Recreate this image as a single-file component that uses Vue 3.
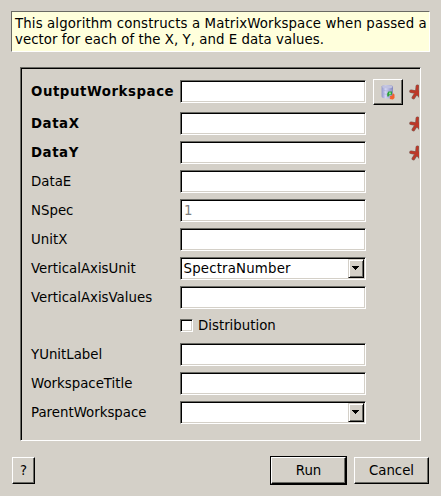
<script setup>
const rows = [
  { label: 'OutputWorkspace', required: true, save: true },
  { label: 'DataX', required: true },
  { label: 'DataY', required: true },
  { label: 'DataE' },
  { label: 'NSpec', placeholder: '1' },
  { label: 'UnitX' },
  { label: 'VerticalAxisUnit', kind: 'combo', value: 'SpectraNumber' },
  { label: 'VerticalAxisValues' },
  { label: 'Distribution', kind: 'check' },
  { label: 'YUnitLabel' },
  { label: 'WorkspaceTitle' },
  { label: 'ParentWorkspace', kind: 'combo', value: '' },
]
</script>

<template>
  <main class="dialog">
    <p class="message">This algorithm constructs a MatrixWorkspace when passed a<br /><span class="second">vector for each of the X, Y, and E data values.</span></p>

    <section class="frame">
      <div
        v-for="row in rows"
        :key="row.label"
        class="row"
        :class="{ tall: row.save, checkrow: row.kind === 'check' }"
      >
        <template v-if="row.kind === 'check'">
          <span class="label"></span>
          <label class="check"><span class="box"></span><span>{{ row.label }}</span></label>
        </template>
        <template v-else>
          <span class="label" :class="{ bold: row.required }">{{ row.label }}</span>
          <div v-if="row.kind === 'combo'" class="field combo">
            <span class="value">{{ row.value }}</span>
            <span class="arrow">
              <svg width="7" height="4" viewBox="0 0 7 4" shape-rendering="crispEdges">
                <path d="M0 0H7V1H6V2H5V3H4V4H3V3H2V2H1V1H0Z" />
              </svg>
            </span>
          </div>
          <div v-else class="field"><span class="placeholder">{{ row.placeholder }}</span></div>
          <span class="action">
            <button v-if="row.save" class="raised save" type="button" aria-label="Replace">
              <svg width="16" height="16" viewBox="0 0 16 16">
                <defs>
                  <linearGradient id="drum" x1="0" x2="1" y1="0" y2="0">
                    <stop offset="0" stop-color="#9094c8" />
                    <stop offset=".35" stop-color="#d4d6f4" />
                    <stop offset="1" stop-color="#8084bc" />
                  </linearGradient>
                </defs>
                <path d="M1.6 2.6Q1.6 .9 7.3 .9T13 2.6V12.6Q13 14.5 7.3 14.5T1.6 12.6Z" fill="url(#drum)" />
                <ellipse cx="7.3" cy="2.7" rx="5.2" ry="1.5" fill="#c0c2e0" />
                <path d="M1.8 6Q7.3 8 12.8 6M1.8 9.5Q7.3 11.5 12.8 9.5" fill="none" stroke="#a4a8d8" stroke-width=".5" />
                <path d="M7.2 12.6V9.4L8.4 7.4H12V10.8H9.8L8.6 12.6Z" fill="#2ca03c" />
                <path d="M9 8.6H10.9V10.2H9Z" fill="#90e890" />
                <path d="M9.8 12.2L12.2 11.4L12.8 9L14.5 10.4V14L12.9 15.4L9.5 15L10.4 13.7Z" fill="#f4602c" />
              </svg>
            </button>
          </span>
          <span class="marker">
            <svg v-if="row.required" width="16" height="16" viewBox="0 0 16 16">
              <g fill="none" stroke-linecap="round">
                <path class="rim" d="M7.8 8.2L8.4 2.2M7.8 8.2L2 7.2M7.8 8.2L4.4 13.6M7.8 8.2L11.6 13.2M7.8 8.2L13.5 6.2" />
                <path class="core" d="M7.8 8.2L8.4 2.2M7.8 8.2L2 7.2M7.8 8.2L4.4 13.6M7.8 8.2L11.6 13.2M7.8 8.2L13.5 6.2" />
              </g>
            </svg>
          </span>
        </template>
      </div>
    </section>

    <footer class="buttons">
      <button class="raised help" type="button">?</button>
      <span class="default"><button class="raised run" type="button">Run</button></span>
      <button class="raised cancel" type="button">Cancel</button>
    </footer>
  </main>
</template>

<style>
body {
  background: #d4d0c8;
}
</style>

<style scoped>
.dialog {
  box-sizing: border-box;
  width: 441px;
  height: 496px;
  padding: 11px 11px 0;
  overflow: hidden;
  background: #d4d0c8;
  color: #000;
  font: 13.33px/16px "DejaVu Sans", sans-serif;
  white-space: nowrap;
}
.message {
  box-sizing: border-box;
  height: 41px;
  margin: 0;
  padding: 4px 3px 0;
  border: 1px solid;
  border-color: #6a6a64 #fff #fff #6a6a64;
  background: #ffffdc;
  letter-spacing: 0.12px;
}
.second {
  letter-spacing: 0.05px;
}
.frame {
  box-sizing: border-box;
  display: flex;
  flex-direction: column;
  gap: 6px;
  width: 401px;
  height: 374px;
  margin: 15px 0 0 9px;
  padding: 11px 1px 0 10px;
  overflow: hidden;
  border: 1px solid;
  border-color: #6a6a64 #fff #fff #6a6a64;
  box-shadow: inset 1px 1px #000, inset -1px -1px #d4d0c8;
}
.row {
  flex: none;
  display: grid;
  grid-template-columns: 149px 186px 37px 16px;
  align-items: center;
  height: 23px;
}
.tall {
  height: 27px;
}
.tall .field {
  margin-bottom: 2px;
}
.tall .label,
.tall .marker,
.tall .action {
  margin-bottom: 1px;
}
.checkrow {
  height: 22px;
}
.bold {
  font-weight: 700;
  letter-spacing: 0.56px;
}
.field {
  box-sizing: border-box;
  height: 23px;
  padding: 2px 2px 2px 3px;
  border: 1px solid;
  border-color: #6a6a64 #fff #fff #6a6a64;
  box-shadow: inset 1px 1px #000, inset -1px -1px #d4d0c8;
  background: #fff;
  line-height: 17px;
}
.placeholder {
  color: #808080;
}
.combo {
  display: flex;
  justify-content: space-between;
  padding: 1px;
  letter-spacing: 0.18px;
}
.value {
  padding: 1px 0 0 1.5px;
}
.arrow {
  box-sizing: border-box;
  display: flex;
  align-items: center;
  justify-content: center;
  width: 16px;
  height: 19px;
  padding-right: 1px;
  padding-bottom: 1px;
  border: 1px solid;
  border-color: #d4d0c8 #000 #000 #d4d0c8;
  box-shadow: inset 1px 1px #fff, inset -1px -1px #6a6a64;
  background: #d4d0c8;
}
.check {
  display: flex;
  align-items: center;
  gap: 5px;
  padding-bottom: 1px;
  line-height: 20px;
}
.box {
  box-sizing: border-box;
  width: 13px;
  height: 13px;
  border: 1px solid;
  border-color: #6a6a64 #fff #fff #6a6a64;
  box-shadow: inset 1px 1px #000, inset -1px -1px #d4d0c8;
  background: #fff;
}
.action {
  display: flex;
  padding-left: 7px;
}
.marker {
  display: flex;
  width: 10px;
  padding-left: 6px;
  overflow: hidden;
}
.marker svg {
  flex: none;
}
.rim {
  stroke: #85645c;
  stroke-width: 3.6;
}
.core {
  stroke: #bc3828;
  stroke-width: 2.4;
}
.raised {
  box-sizing: border-box;
  display: flex;
  align-items: center;
  justify-content: center;
  margin: 0;
  padding: 0;
  border: 1px solid;
  border-color: #fff #000 #000 #fff;
  border-radius: 0;
  box-shadow: inset -1px -1px #6a6a64;
  background: #d4d0c8;
  color: #000;
  font: inherit;
}
.save {
  width: 30px;
  height: 26px;
}
.buttons {
  display: flex;
  align-items: center;
  height: 29px;
  margin: 15px 0 0 1px;
}
.help {
  width: 23px;
  height: 27px;
}
.default {
  margin: 0 7px 0 auto;
  border: 1px solid #000;
}
.run {
  width: 75px;
  height: 27px;
}
.cancel {
  width: 75px;
  height: 27px;
  margin-right: 1px;
}
</style>
